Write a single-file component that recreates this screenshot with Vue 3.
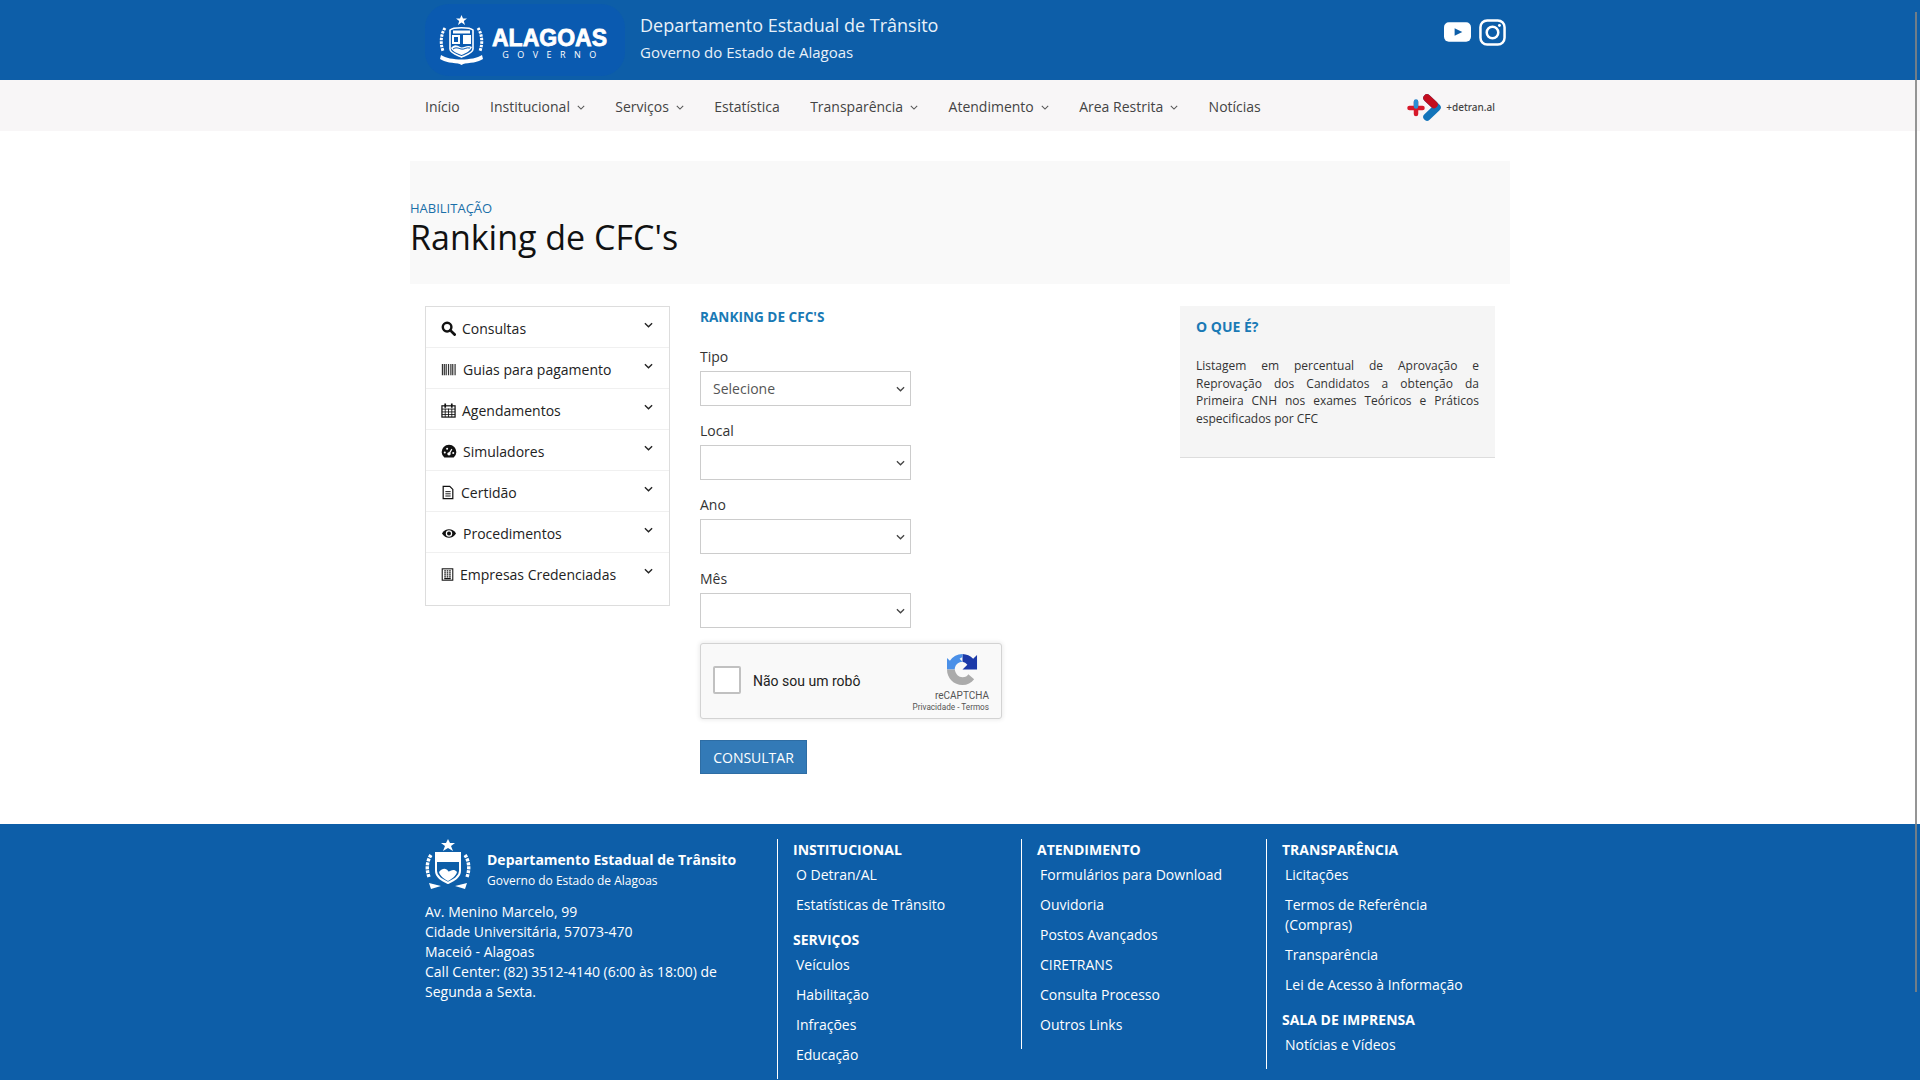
<template>
  <div class="page">
    <header class="topbar">
      <div class="container topbar-in">
        <div class="brand">
          <div class="logo">
            <svg class="crest" viewBox="0 0 47 50">
              <polygon points="23.5,0 25,3.6 29,3.6 25.8,6 27,10 23.5,7.6 20,10 21.2,6 18,3.6 22,3.6" fill="#fff" />
              <path d="M12 15c3-3 20-3 23 0v19c0 4-7 6-11.500 8-4.500-2-11.500-4-11.500-8z" fill="#0a5ab0" stroke="#fff" stroke-width="1.6" />
              <path d="M15 15.500h17v3H15z" fill="#fff" />
              <path d="M14 20h8v9h-8zM25 20h8v9h-8z" fill="#fff" />
              <path d="M16 22h4v5h-4z" fill="#0a5ab0" />
              <path d="M13 33c3-4 6-3 9-1s7-3 12 0c-1 3-5 6-10.500 8-5-2-9.500-4-10.500-7z" fill="#fff" />
              <path d="M15 34c3-2 5-1 8 0s5-2 9-1" fill="none" stroke="#0a5ab0" stroke-width="1" />
              <path d="M7 13c-4 6-5 15-2 23M40 13c4 6 5 15 2 23" fill="none" stroke="#fff" stroke-width="3" stroke-dasharray="2.500 1" />
              <path d="M3 40c9 6 32 6 41 0l1 4c-9 6-34 6-43 0z" fill="#fff" />
              <path d="M18 47h11l-5.500 3z" fill="#fff" />
            </svg>
            <div class="logo-text">
              <span class="logo-name">ALAGOAS</span>
              <span class="logo-sub">GOVERNO</span>
            </div>
          </div>
          <div class="brand-text">
            <div class="brand-title">Departamento Estadual de Trânsito</div>
            <div class="brand-sub">Governo do Estado de Alagoas</div>
          </div>
        </div>
        <div class="social">
          <svg class="yt" viewBox="0 0 28 20">
            <rect width="28" height="20" rx="5" fill="#fff" />
            <polygon points="11,6 19,10 11,14" fill="#0d5ea8" />
          </svg>
          <svg class="ig" viewBox="0 0 28 28" fill="none" stroke="#fff" stroke-width="2.600">
            <rect x="1.500" y="1.500" width="25" height="25" rx="7" />
            <circle cx="14" cy="14" r="6" />
            <circle cx="21.200" cy="6.800" r="1.500" fill="#fff" stroke="none" />
          </svg>
        </div>
      </div>
    </header>

    <nav class="mainnav">
      <div class="container nav-in">
        <ul class="menu">
          <li v-for="item in menu" :key="item.label">
            {{ item.label }}
            <svg v-if="item.sub" class="caret" viewBox="0 0 10 6"><path d="M1 1l4 4 4-4" fill="none" stroke="#555" stroke-width="1.300" /></svg>
          </li>
        </ul>
        <div class="detran">
          <svg viewBox="0 0 34 27" class="detran-icon">
            <path d="M20 4l10 9.500-10 9.500" fill="none" stroke="#1374ba" stroke-width="7.500" stroke-linecap="round" stroke-linejoin="round" />
            <path d="M20 4l7 6.500" fill="none" stroke="#c40d1e" stroke-width="7.500" stroke-linecap="round" />
            <path d="M2.500 14h13" fill="none" stroke="#d7182a" stroke-width="4.500" stroke-linecap="round" />
            <path d="M9 8v12" fill="none" stroke="#d7182a" stroke-width="4.500" stroke-linecap="round" />
            <path d="M9 7.500v5" fill="none" stroke="#2a8fd6" stroke-width="4.500" stroke-linecap="round" />
          </svg>
          <span>+detran.al</span>
        </div>
      </div>
    </nav>

    <main class="content">
      <section class="hero">
        <div class="hero-kicker">HABILITAÇÃO</div>
        <h1>Ranking de CFC's</h1>
      </section>

      <div class="columns">
        <aside class="side">
          <div v-for="row in sideRows" :key="row.label" class="side-row">
            <span class="side-label">
              <svg class="side-icon" :style="{ width: row.w + 'px' }" viewBox="0 0 16 16" v-html="row.icon"></svg>
              {{ row.label }}
            </span>
            <svg class="side-caret" viewBox="0 0 10 6"><path d="M1 1l4 4 4-4" fill="none" stroke="#222" stroke-width="1.500" /></svg>
          </div>
        </aside>

        <section class="form">
          <h2>RANKING DE CFC'S</h2>
          <div v-for="f in fields" :key="f.label" class="field">
            <label>{{ f.label }}</label>
            <div class="select">
              <span>{{ f.value }}</span>
              <svg viewBox="0 0 10 6"><path d="M1 1l4 4 4-4" fill="none" stroke="#444" stroke-width="1.400" /></svg>
            </div>
          </div>
          <div class="captcha">
            <div class="check"></div>
            <div class="captcha-label">Não sou um robô</div>
            <div class="captcha-logo">
              <svg viewBox="0 0 32 32" class="recaptcha">
                <path d="M16 0a16 16 0 0 1 11 5l4-4v15H16l5-5a8 8 0 0 0-5-3z" fill="#1c3aa9" />
                <path d="M16 0A16 16 0 0 0 3 7L0 4v12h8c0-4 3-8 8-8l-3-3 3-2z" fill="#4a90e8" />
                <path d="M0 16c0 9 7 16 16 16 5 0 9-2 12-6l-6-5c-1 2-3 3-6 3-4 0-7-3-8-8z" fill="#ababab" />
              </svg>
              <div class="rc-name">reCAPTCHA</div>
              <div class="rc-links">Privacidade - Termos</div>
            </div>
          </div>
          <button class="submit">CONSULTAR</button>
        </section>

        <aside class="info">
          <h3>O QUE É?</h3>
          <p>Listagem em percentual de Aprovação e Reprovação dos Candidatos a obtenção da Primeira CNH nos exames Teóricos e Práticos especificados por CFC</p>
        </aside>
      </div>
    </main>

    <footer class="foot">
      <div class="container foot-in">
        <div class="foot-about">
          <div class="foot-brand">
            <svg class="foot-crest" viewBox="0 0 46 52">
              <polygon points="23,0 25,4 30,4 26,7 28,12 23,9 18,12 20,7 16,4 21,4" fill="#fff" />
              <path d="M11 14h24v18c0 6-6 9-12 12-6-3-12-6-12-12z" fill="none" stroke="#fff" stroke-width="2" />
              <path d="M12 15h22v8H12z" fill="#fff" />
              <path d="M14 33c4-5 8-3 9-1s5-4 9 1c-1 4-5 7-9 9-4-2-8-5-9-9z" fill="#fff" />
              <path d="M6 16c-4 6-5 14-2 22M40 16c4 6 5 14 2 22" fill="none" stroke="#fff" stroke-width="3.400" stroke-dasharray="3 1" />
              <path d="M4 44l12 3-10 3zM42 44l-12 3 10 3z" fill="#fff" />
            </svg>
            <div class="foot-brand-text">
              <div class="foot-title">Departamento Estadual de Trânsito</div>
              <div class="foot-sub">Governo do Estado de Alagoas</div>
            </div>
          </div>
          <p>Av. Menino Marcelo, 99<br />Cidade Universitária, 57073-470<br />Maceió - Alagoas<br />Call Center: (82) 3512-4140 (6:00 às 18:00) de Segunda a Sexta.</p>
        </div>
        <div v-for="(col, i) in footCols" :key="i" class="foot-col" :class="'col-' + i">
          <template v-for="group in col" :key="group.title">
            <h4>{{ group.title }}</h4>
            <a v-for="link in group.links" :key="link">{{ link }}</a>
          </template>
        </div>
      </div>
    </footer>

    <div class="scrollbar"></div>
  </div>
</template>

<script setup>
const menu = [
  { label: 'Início' },
  { label: 'Institucional', sub: true },
  { label: 'Serviços', sub: true },
  { label: 'Estatística' },
  { label: 'Transparência', sub: true },
  { label: 'Atendimento', sub: true },
  { label: 'Area Restrita', sub: true },
  { label: 'Notícias' }
]

const sideRows = [
  { label: 'Consultas', w: 15, icon: '<circle cx="6.5" cy="6.5" r="4.6" fill="none" stroke="#111" stroke-width="2.6"/><path d="M10 10l4.5 4.5" stroke="#111" stroke-width="3" stroke-linecap="round"/>' },
  { label: 'Guias para pagamento', w: 16, icon: '<path d="M1 2v12M3 2v12M5 2v12M7.500 2v12M10 2v12M12 2v12M14.500 2v12" stroke="#333" stroke-width="1.300"/>' },
  { label: 'Agendamentos', w: 15, icon: '<rect x="1" y="3" width="14" height="12" fill="none" stroke="#111" stroke-width="1.300"/><path d="M1 6.500h14M1 9.500h14M1 12.300h14M4.500 6v9M8 6v9M11.500 6v9" stroke="#111" stroke-width=".9"/><path d="M4.500 .5v4.500M11.500 .5v4.500" stroke="#111" stroke-width="1.800"/>' },
  { label: 'Simuladores', w: 16, icon: '<path d="M3 14.500a7.800 7.800 0 1 1 10 0z" fill="#111"/><circle cx="8" cy="10.500" r="1.800" fill="#fff"/><path d="M8 10.500l3-5" stroke="#fff" stroke-width="1.300"/><circle cx="3.500" cy="9" r="1.100" fill="#fff"/><circle cx="6" cy="5" r="1.100" fill="#fff"/><circle cx="12.500" cy="9.500" r="1.100" fill="#fff"/>' },
  { label: 'Certidão', w: 14, icon: '<path d="M2.500 1h7.500l3.500 3.500V15h-11z" fill="none" stroke="#111" stroke-width="1.400"/><path d="M5 7h6M5 9.500h6M5 12h6" stroke="#111" stroke-width="1.100"/>' },
  { label: 'Procedimentos', w: 16, icon: '<path d="M.5 8c3.500-6 11.500-6 15 0-3.500 6-11.500 6-15 0z" fill="#111"/><circle cx="8" cy="8" r="3.400" fill="#fff"/><circle cx="8" cy="8" r="2.100" fill="#111"/>' },
  { label: 'Empresas Credenciadas', w: 13, icon: '<rect x="1.500" y="1" width="13" height="14" fill="none" stroke="#111" stroke-width="1.300"/><path d="M4 3.500h2M7 3.500h2M10 3.500h2M4 6h2M7 6h2M10 6h2M4 8.500h2M7 8.500h2M10 8.500h2M4 11h2M7 11h2M10 11h2M4 13.200h8" stroke="#111" stroke-width="1.500"/>' }
]

const fields = [
  { label: 'Tipo', value: 'Selecione' },
  { label: 'Local', value: '' },
  { label: 'Ano', value: '' },
  { label: 'Mês', value: '' }
]

const footCols = [
  [
    { title: 'INSTITUCIONAL', links: ['O Detran/AL', 'Estatísticas de Trânsito'] },
    { title: 'SERVIÇOS', links: ['Veículos', 'Habilitação', 'Infrações', 'Educação'] }
  ],
  [
    { title: 'ATENDIMENTO', links: ['Formulários para Download', 'Ouvidoria', 'Postos Avançados', 'CIRETRANS', 'Consulta Processo', 'Outros Links'] }
  ],
  [
    { title: 'TRANSPARÊNCIA', links: ['Licitações', 'Termos de Referência (Compras)', 'Transparência', 'Lei de Acesso à Informação'] },
    { title: 'SALA DE IMPRENSA', links: ['Notícias e Vídeos'] }
  ]
]
</script>

<style>
html, body {
  margin: 0;
  height: 100%;
  overflow: hidden;
  background: #fff;
}
</style>

<style scoped>
.page {
  height: 1080px;
  overflow: hidden;
  position: relative;
  font-family: "Open Sans", "Noto Sans", sans-serif;
  font-size: 14px;
  color: #333;
}

.container {
  width: 1100px;
  margin: 0 auto;
  padding: 0 15px;
  box-sizing: border-box;
}

.topbar {
  height: 80px;
  background: #0d5ea8;
}

.topbar-in {
  display: flex;
  justify-content: space-between;
  height: 80px;
}

.brand {
  display: flex;
}

.logo {
  width: 200px;
  height: 72px;
  margin-top: 4px;
  background: #0a5ab0;
  border-radius: 24px;
  display: flex;
  align-items: center;
  padding-left: 13px;
  box-sizing: border-box;
  gap: 7px;
}

.crest {
  width: 47px;
  height: 50px;
}

.logo-text {
  display: flex;
  flex-direction: column;
  align-items: center;
  color: #fff;
  margin-top: 6px;
}

.logo-name {
  font-family: "Liberation Sans", sans-serif;
  font-weight: 700;
  font-size: 23px;
  line-height: 24px;
  -webkit-text-stroke: 0.8px #fff;
}

.logo-sub {
  font-size: 9px;
  line-height: 10px;
  letter-spacing: 8.5px;
  margin-right: -8px;
}

.brand-text {
  margin-left: 15px;
  padding-top: 12px;
  color: #e8f1f9;
}

.brand-title {
  font-size: 18px;
  line-height: 26px;
}

.brand-sub {
  font-size: 15px;
  line-height: 22px;
  margin-top: 3px;
}

.social {
  display: flex;
  align-items: flex-start;
  gap: 8px;
  padding-top: 19px;
  margin-right: -11px;
}

.yt {
  width: 27px;
  height: 20px;
  margin-top: 3px;
}

.ig {
  width: 27px;
  height: 27px;
}

.mainnav {
  height: 51px;
  background: #f8f6f7;
}

.nav-in {
  display: flex;
  justify-content: space-between;
  align-items: center;
  height: 51px;
}

.menu {
  display: flex;
  list-style: none;
  margin: 0;
  padding: 2px 0 0;
  gap: 30.4px;
  font-size: 14px;
  color: #444;
}

.menu li {
  display: flex;
  align-items: center;
  gap: 7px;
}

.caret {
  width: 8px;
  height: 5px;
  margin-top: 2px;
}

.detran {
  display: flex;
  align-items: center;
  gap: 5px;
  font-family: "Noto Sans", sans-serif;
  font-size: 10px;
  font-weight: 500;
  color: #444;
  padding-top: 3px;
}

.detran-icon {
  width: 34px;
  height: 27px;
}

.content {
  height: 693px;
  box-sizing: border-box;
  padding-top: 30px;
}

.hero {
  width: 1100px;
  height: 123px;
  margin: 0 auto;
  box-sizing: border-box;
  padding-top: 39px;
  background: #f9f9f9;
}

.hero-kicker {
  font-size: 13px;
  line-height: 17px;
  color: #1a6fa8;
}

.hero h1 {
  margin: -1px 0 0;
  font-size: 34px;
  line-height: 42px;
  font-weight: 400;
  color: #111;
}

.columns {
  width: 1100px;
  margin: 22px auto 0;
  padding: 0 15px;
  box-sizing: border-box;
  display: flex;
}

.side {
  width: 245px;
  height: 300px;
  box-sizing: border-box;
  border: 1px solid #ddd;
  flex-shrink: 0;
}

.side-row {
  height: 41px;
  box-sizing: border-box;
  display: flex;
  justify-content: space-between;
  padding: 11px 16px 0 15px;
  border-bottom: 1px solid #f0f0f0;
  color: #222;
}

.side-row:last-child {
  border-bottom: 0;
}

.side-label {
  display: flex;
  align-items: center;
  gap: 6px;
  height: 20px;
}

.side-icon {
  height: 15px;
}

.side-caret {
  width: 9px;
  height: 6px;
  margin-top: 4px;
}

.form {
  width: 480px;
  margin-left: 30px;
  flex-shrink: 0;
}

.form h2 {
  margin: 1px 0 0;
  font-size: 13.6px;
  line-height: 20px;
  font-weight: 700;
  color: #1a7ab5;
}

.field {
  margin-top: 20px;
}

.field + .field {
  margin-top: 15px;
}

.field label {
  display: block;
  line-height: 20px;
  margin-bottom: 4px;
  color: #333;
}

.select {
  width: 211px;
  height: 35px;
  box-sizing: border-box;
  border: 1px solid #ccc;
  display: flex;
  align-items: center;
  justify-content: space-between;
  padding: 0 5px 0 12px;
  color: #555;
}

.select svg {
  width: 9px;
  height: 6px;
}

.captcha {
  width: 302px;
  height: 76px;
  margin-top: 15px;
  box-sizing: border-box;
  border: 1px solid #d3d3d3;
  border-radius: 3px;
  background: #f9f9f9;
  box-shadow: 0 0 4px 1px rgba(0, 0, 0, 0.08);
  display: flex;
  align-items: center;
  padding: 0 0 3px 12px;
  position: relative;
}

.check {
  width: 28px;
  height: 28px;
  box-sizing: border-box;
  border: 2px solid #c1c1c1;
  border-radius: 2px;
  background: #fff;
}

.captcha-label {
  font-family: Roboto, "Liberation Sans", sans-serif;
  font-size: 14px;
  margin: 2px 0 0 12px;
  color: #222;
}

.captcha-logo {
  position: absolute;
  right: 12px;
  top: 10px;
  display: flex;
  flex-direction: column;
  align-items: flex-end;
  font-family: Roboto, "Liberation Sans", sans-serif;
  color: #555;
}

.recaptcha {
  width: 31px;
  height: 31px;
  margin-right: 11px;
}

.rc-name {
  font-size: 10px;
  line-height: 12px;
  margin-top: 5px;
}

.rc-links {
  font-size: 8.2px;
  line-height: 11px;
}

.submit {
  display: block;
  width: 107px;
  height: 34px;
  margin-top: 21px;
  padding: 0;
  background: #337ab7;
  border: 1px solid #2e6da4;
  color: #fff;
  font-family: inherit;
  font-size: 14px;
}

.info {
  width: 315px;
  height: 152px;
  box-sizing: border-box;
  padding: 11px 16px;
  background: #f5f5f5;
  border-bottom: 1px solid #ddd;
}

.info h3 {
  margin: 0;
  font-size: 14px;
  line-height: 20px;
  font-weight: 700;
  color: #1a7ab5;
}

.info p {
  margin: 20px 0 0;
  font-size: 12px;
  line-height: 17.7px;
  text-align: justify;
  color: #333;
}

.foot {
  height: 256px;
  background: #0d5ea8;
  color: #fff;
}

.foot-in {
  display: flex;
  padding-top: 15px;
}

.foot-about {
  width: 352px;
  flex-shrink: 0;
}

.foot-brand {
  display: flex;
  gap: 16px;
  align-items: center;
}

.foot-crest {
  width: 46px;
  height: 52px;
}

.foot-brand-text {
  padding-top: 9px;
}

.foot-title {
  font-weight: 700;
  font-size: 14px;
  line-height: 22px;
}

.foot-sub {
  font-size: 12px;
  line-height: 20px;
}

.foot-about p {
  margin: 11px 0 0;
  width: 320px;
  line-height: 20px;
}

.foot-col {
  width: 244px;
  flex-shrink: 0;
  box-sizing: border-box;
  border-left: 1px solid #fff;
  padding: 1px 15px 0;
  display: flex;
  flex-direction: column;
  align-items: flex-start;
}

.foot-col h4 {
  margin: 0;
  font-size: 14px;
  line-height: 20px;
  font-weight: 700;
}

.foot-col a {
  padding: 0 0 10px 3px;
  line-height: 20px;
}

.foot-col h4 + a {
  margin-top: 5px;
}

.foot-col a + h4 {
  margin-top: 5px;
}

.col-0 {
  height: 240px;
}

.col-1 {
  width: 245px;
  height: 210px;
}

.col-2 {
  height: 230px;
}

.scrollbar {
  position: absolute;
  right: 3px;
  top: 12px;
  width: 2px;
  height: 980px;
  background: rgba(130, 130, 130, 0.85);
}
</style>
